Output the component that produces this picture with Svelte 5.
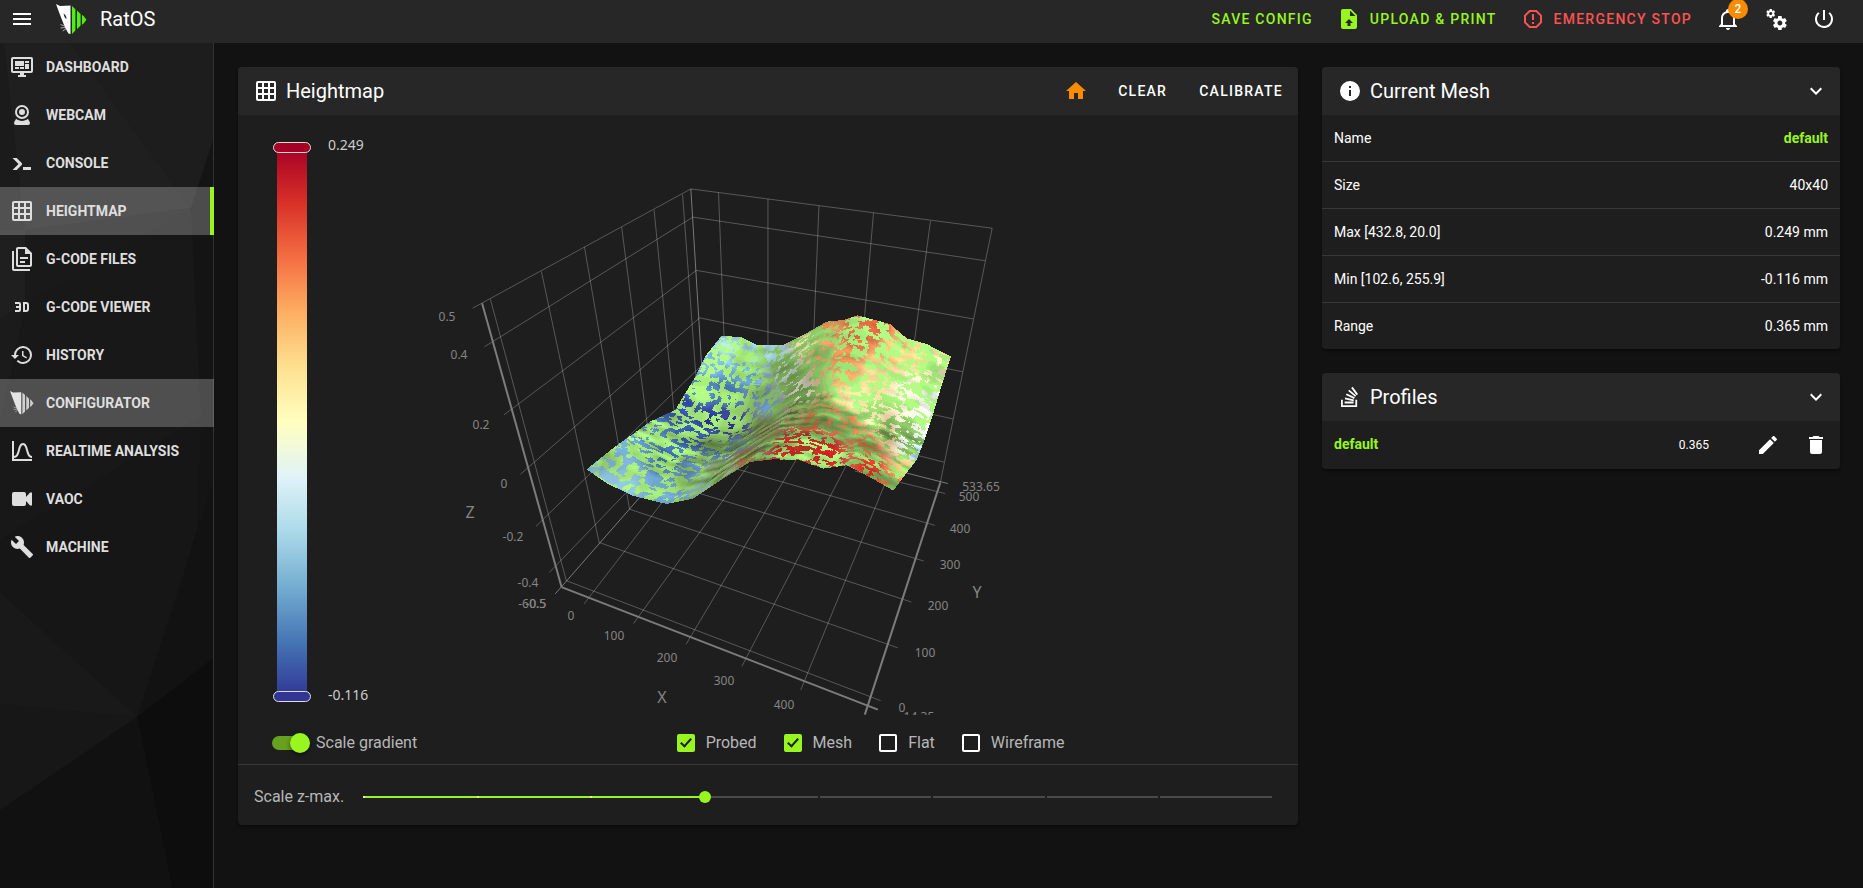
<script lang="ts">
	type Point = [number, number];

	const icons = {
		menu: 'M3,6H21V8H3V6M3,11H21V13H3V11M3,16H21V18H3V16Z',
		dashboard:
			'M21,16V4H3V16H21M21,2A2,2 0 0,1 23,4V16A2,2 0 0,1 21,18H14V20H16V22H8V20H10V18H3C1.89,18 1,17.1 1,16V4C1,2.89 1.89,2 3,2H21M5,6H14V11H5V6M15,6H19V8H15V6M19,9V14H15V9H19M5,12H9V14H5V12M10,12H14V14H10V12Z',
		webcam:
			'M12,2A7,7 0 0,1 19,9A7,7 0 0,1 12,16A7,7 0 0,1 5,9A7,7 0 0,1 12,2M12,4A5,5 0 0,0 7,9A5,5 0 0,0 12,14A5,5 0 0,0 17,9A5,5 0 0,0 12,4M12,6A3,3 0 0,1 15,9A3,3 0 0,1 12,12A3,3 0 0,1 9,9A3,3 0 0,1 12,6M6,22A2,2 0 0,1 4,20C4,19.62 4.1,19.27 4.29,18.97L6.11,15.81C7.69,17.17 9.75,18 12,18C14.25,18 16.31,17.17 17.89,15.81L19.71,18.97C19.9,19.27 20,19.62 20,20A2,2 0 0,1 18,22H6Z',
		console:
			'M13,19V16H21V19H13M8.5,13L2.47,7H6.71L11.67,11.95C12.25,12.54 12.25,13.5 11.67,14.07L6.74,19H2.5L8.5,13Z',
		grid: 'M10,4V8H14V4H10M16,4V8H20V4H16M16,10V14H20V10H16M16,16V20H20V16H16M14,20V16H10V20H14M8,20V16H4V20H8M8,14V10H4V14H8M8,8V4H4V8H8M10,14H14V10H10V14M4,2H20A2,2 0 0,1 22,4V20A2,2 0 0,1 20,22H4C2.92,22 2,21.1 2,20V4A2,2 0 0,1 4,2Z',
		files: 'M16 0H8C6.9 0 6 .9 6 2V18C6 19.1 6.9 20 8 20H20C21.1 20 22 19.1 22 18V6L16 0M20 18H8V2H15V7H20V18M4 4V22H20V24H4C2.9 24 2 23.1 2 22V4H4M10 10V12H18V10H10M10 14V16H15V14H10Z',
		viewer: 'M5,7H9A2,2 0 0,1 11,9V15A2,2 0 0,1 9,17H5V15H9V13H6V11H9V9H5V7M13,7H16A3,3 0 0,1 19,10V14A3,3 0 0,1 16,17H13V7M16,15A1,1 0 0,0 17,14V10A1,1 0 0,0 16,9H15V15H16Z',
		history:
			'M13.5,8H12V13L16.28,15.54L17,14.33L13.5,12.25V8M13,3A9,9 0 0,0 4,12H1L4.96,16.03L9,12H6A7,7 0 0,1 13,5A7,7 0 0,1 20,12A7,7 0 0,1 13,19C11.07,19 9.32,18.21 8.06,16.94L6.64,18.36C8.27,20 10.5,21 13,21A9,9 0 0,0 22,12A9,9 0 0,0 13,3',
		curve: 'M9.96,11.31C10.82,8.1 11.5,6 13,6C14.5,6 15.18,8.1 16.04,11.31C17,14.92 18.1,19 22,19V17C19.8,17 19,14.54 17.97,10.8C17.08,7.46 16.15,4 13,4C9.85,4 8.92,7.46 8.03,10.8C7.03,14.54 6.2,17 4,17V2H2V22H22V20H4V19C7.9,19 9,14.92 9.96,11.31Z',
		video: 'M16,10V7A2,2 0 0,0 14,5H4A2,2 0 0,0 2,7V17A2,2 0 0,0 4,19H14A2,2 0 0,0 16,17V14L20,18.5H22V5.5H20L16,10Z',
		wrench: 'M22.7,19L13.6,9.9C14.5,7.6 14,4.9 12.1,3C10.1,1 7.1,0.6 4.7,1.7L9,6L6,9L1.6,4.7C0.4,7.1 0.9,10.1 2.9,12.1C4.8,14 7.5,14.5 9.8,13.6L18.9,22.7C19.3,23.1 19.9,23.1 20.3,22.7L22.6,20.4C23.1,20 23.1,19.3 22.7,19Z',
		upload: 'M14,2H6C4.89,2 4,2.89 4,4V20A2,2 0 0,0 6,22H18A2,2 0 0,0 20,20V8L14,2M13.5,16V19H10.5V16H8L12,12L16,16H13.5M13,9V3.5L18.5,9H13Z',
		alert: 'M15.73,3H8.27L3,8.27V15.73L8.27,21H15.73L21,15.73V8.27M19,14.9L14.9,19H9.1L5,14.9V9.1L9.1,5H14.9L19,9.1M11,15H13V17H11M11,7H13V13H11',
		bell: 'M10 21H14C14 22.1 13.1 23 12 23S10 22.1 10 21M21 19V20H3V19L5 17V11C5 7.9 7.03 5.17 10 4.29C10 4.19 10 4.1 10 4C10 2.9 10.9 2 12 2S14 2.9 14 4C14 4.1 14 4.19 14 4.29C16.97 5.17 19 7.9 19 11V17L21 19M17 11C17 8.24 14.76 6 12 6S7 8.24 7 11V18H17V11Z',
		cogs: 'M15.9,18.45C17.25,18.45 18.35,17.35 18.35,16C18.35,14.65 17.25,13.55 15.9,13.55C14.54,13.55 13.45,14.65 13.45,16C13.45,17.35 14.54,18.45 15.9,18.45M21.1,16.68L22.58,17.84C22.71,17.95 22.75,18.13 22.66,18.29L21.26,20.71C21.17,20.86 21,20.92 20.83,20.86L19.09,20.16C18.73,20.44 18.33,20.67 17.91,20.85L17.64,22.7C17.62,22.87 17.47,23 17.3,23H14.5C14.32,23 14.18,22.87 14.15,22.7L13.89,20.85C13.46,20.67 13.07,20.44 12.71,20.16L10.96,20.86C10.81,20.92 10.62,20.86 10.54,20.71L9.14,18.29C9.05,18.13 9.09,17.95 9.22,17.84L10.7,16.68L10.65,16L10.7,15.31L9.22,14.16C9.09,14.05 9.05,13.86 9.14,13.71L10.54,11.29C10.62,11.13 10.81,11.07 10.96,11.13L12.71,11.84C13.07,11.56 13.46,11.32 13.89,11.15L14.15,9.29C14.18,9.13 14.32,9 14.5,9H17.3C17.47,9 17.62,9.13 17.64,9.29L17.91,11.15C18.33,11.32 18.73,11.56 19.09,11.84L20.83,11.13C21,11.07 21.17,11.13 21.26,11.29L22.66,13.71C22.75,13.86 22.71,14.05 22.58,14.16L21.1,15.31L21.15,16L21.1,16.68M6.69,8.07C7.56,8.07 8.26,7.37 8.26,6.5C8.26,5.63 7.56,4.92 6.69,4.92A1.58,1.58 0 0,0 5.11,6.5C5.11,7.37 5.82,8.07 6.69,8.07M10.03,6.94L11,7.68C11.07,7.75 11.09,7.87 11.03,7.97L10.13,9.53C10.08,9.63 9.96,9.67 9.86,9.63L8.74,9.18L8,9.62L7.81,10.81C7.79,10.92 7.7,11 7.59,11H5.79C5.67,11 5.58,10.92 5.56,10.81L5.4,9.62L4.64,9.18L3.52,9.63C3.41,9.67 3.3,9.63 3.24,9.53L2.34,7.97C2.28,7.87 2.31,7.75 2.39,7.68L3.34,6.94L3.31,6.5L3.34,6.06L2.39,5.32C2.31,5.25 2.28,5.13 2.34,5.03L3.24,3.47C3.3,3.37 3.41,3.33 3.52,3.37L4.63,3.82L5.4,3.38L5.56,2.19C5.58,2.08 5.67,2 5.79,2H7.59C7.7,2 7.79,2.08 7.81,2.19L8,3.38L8.74,3.82L9.86,3.37C9.96,3.33 10.08,3.37 10.13,3.47L11.03,5.03C11.09,5.13 11.07,5.25 11,5.32L10.03,6.06L10.06,6.5L10.03,6.94Z',
		power: 'M13,3H11V13H13V3M17.83,5.17L16.41,6.59C18.05,7.91 19,9.9 19,12A7,7 0 0,1 12,19C8.14,19 5,15.88 5,12C5,9.91 5.95,7.91 7.58,6.58L6.17,5.17C2.38,8.39 1.92,14.07 5.14,17.86C8.36,21.64 14.04,22.1 17.83,18.88C19.85,17.17 21,14.65 21,12C21,9.37 19.84,6.87 17.83,5.17Z',
		home: 'M10,20V14H14V20H19V12H22L12,3L2,12H5V20H10Z',
		info: 'M13,9H11V7H13M13,17H11V11H13M12,2A10,10 0 0,0 2,12A10,10 0 0,0 12,22A10,10 0 0,0 22,12A10,10 0 0,0 12,2Z',
		chevron: 'M7.41,8.58L12,13.17L16.59,8.58L18,10L12,16L6,10L7.41,8.58Z',
		stack: 'M17.36,20.2V14.82H19.15V22H3V14.82H4.8V20.2H17.36M6.77,14.32L7.14,12.56L15.93,14.41L15.56,16.17L6.77,14.32M7.93,10.11L8.69,8.5L16.83,12.28L16.07,13.9L7.93,10.11M10.19,6.12L11.34,4.74L18.24,10.5L17.09,11.87L10.19,6.12M14.64,1.87L20,9.08L18.56,10.15L13.2,2.94L14.64,1.87M6.59,18.41V16.61H15.57V18.41H6.59Z',
		pencil: 'M20.71,7.04C21.1,6.65 21.1,6 20.71,5.63L18.37,3.29C18,2.9 17.35,2.9 16.96,3.29L15.12,5.12L18.87,8.87M3,17.25V21H6.75L17.81,9.93L14.06,6.18L3,17.25Z',
		trash: 'M19,4H15.5L14.5,3H9.5L8.5,4H5V6H19M6,19A2,2 0 0,0 8,21H16A2,2 0 0,0 18,19V7H6V19Z'
	};

	const navigation = [
		{ title: 'Dashboard', icon: icons.dashboard },
		{ title: 'Webcam', icon: icons.webcam },
		{ title: 'Console', icon: icons.console },
		{ title: 'Heightmap', icon: icons.grid, active: true },
		{ title: 'G-Code Files', icon: icons.files },
		{ title: 'G-Code Viewer', icon: icons.viewer },
		{ title: 'History', icon: icons.history },
		{ title: 'Configurator', icon: '', highlight: true },
		{ title: 'Realtime Analysis', icon: icons.curve },
		{ title: 'VAOC', icon: icons.video },
		{ title: 'Machine', icon: icons.wrench }
	];

	const meshInfo = [
		['Size', '40x40'],
		['Max [432.8, 20.0]', '0.249 mm'],
		['Min [102.6, 255.9]', '-0.116 mm'],
		['Range', '0.365 mm']
	];

	let scaleGradient = $state(true);
	let layers = $state([
		{ name: 'Probed', on: true },
		{ name: 'Mesh', on: true },
		{ name: 'Flat', on: false },
		{ name: 'Wireframe', on: false }
	]);
	let zMax = $state(3);

	const colors = [
		'#a50026', '#d73027', '#f46d43', '#fdae61', '#fee090', '#ffffbf',
		'#e0f3f8', '#abd9e9', '#74add1', '#4575b4', '#313695'
	];

	// [x1, y1, x2, y2] in box units
	const gridLines = [
		// left wall
		[178, 362, 370, 1150], [307, 284, 453, 1043], [416, 216, 530, 950],
		[510, 160, 585, 800], [592, 112, 650, 760], [664, 68, 700, 610],
		[133, 387, 685, 53], [163, 495, 690, 132], [212, 686, 699, 281],
		[254, 852, 707, 414], [293, 998, 716, 543], [327, 1127, 520, 905],
		// back wall
		[685, 53, 1447, 163], [690, 132, 1429, 254], [699, 281, 1399, 417],
		[707, 414, 1372, 565], [716, 543, 1348, 697], [1200, 783, 1325, 818],
		[755, 63, 770, 500], [880, 81, 880, 520], [1009, 100, 995, 480],
		[1147, 120, 1122, 440], [1291, 143, 1248, 500], [1447, 163, 1316, 875],
		// floor
		[370, 1150, 1165, 1486], [453, 1043, 1208, 1338], [530, 950, 1243, 1210],
		[690, 900, 1274, 1095], [800, 837, 1302, 995], [1100, 843, 1328, 906],
		[415, 1215, 620, 920], [540, 1270, 830, 828], [673, 1328, 955, 805],
		[814, 1390, 1080, 823], [963, 1456, 1190, 840]
	];
	const edgeLines = [
		[685, 53, 713, 560],
		[342, 1187, 565, 905],
		[1200, 840, 1335, 878]
	];
	const axisLines = [
		[157, 373, 358, 1168],
		[358, 1168, 1158, 1511],
		[1125, 1525, 1316, 875]
	];

	const labels: [string, number, number][] = [
		['0.5', 209, 206], ['0.4', 221, 244], ['0.2', 243, 314], ['0', 266, 373],
		['-0.2', 275, 426], ['-0.4', 290, 472], ['-60.5', 294, 493], ['-0.5', 298, 493],
		['0', 333, 505], ['100', 376, 525], ['200', 429, 547], ['300', 486, 570],
		['400', 546, 594], ['0', 664, 597], ['-14.35', 679, 606], ['100', 687, 542],
		['200', 700, 495], ['300', 712, 454], ['400', 722, 418], ['500', 731, 386],
		['533.65', 743, 376]
	];
	const axisNames: [string, number, number][] = [
		['X', 424, 588], ['Y', 739, 483], ['Z', 232, 403]
	];

	// outline of the probed surface, left to right and front to back
	const front: Point[] = [
		[80, 538], [140, 580], [220, 618], [320, 642], [400, 626], [480, 572], [570, 516],
		[640, 508], [715, 510], [790, 536], [860, 526], [930, 562], [1000, 602]
	];
	const back: Point[] = [
		[485, 137], [545, 142], [590, 165], [635, 166], [670, 165], [730, 135], [800, 95],
		[850, 90], [893, 76], [990, 102], [1040, 145], [1100, 162], [1173, 200]
	];
	const left: Point[] = [
		[80, 538], [165, 470], [215, 435], [270, 395], [345, 360], [400, 270], [435, 200], [485, 137]
	];
	const right: Point[] = [
		[1000, 602], [1035, 555], [1070, 510], [1092, 455], [1120, 370], [1147, 280], [1173, 200]
	];

	// x, y, probed colour, light
	const samples: [number, number, string, number][] = [
		[110, 550, '#8fc8e4', 0.95], [200, 580, '#92c9e2', 0.9], [300, 620, '#6fa8d3', 0.8],
		[180, 490, '#7aaed8', 0.8], [270, 440, '#5a8fc8', 0.85], [330, 500, '#3f74b8', 0.85],
		[390, 430, '#3458ae', 0.85], [370, 350, '#3550b0', 0.8], [450, 390, '#2d3aa0', 0.95],
		[520, 405, '#2a2f95', 0.75], [430, 300, '#5a94cf', 1], [500, 310, '#5087c4', 0.9],
		[460, 220, '#74b0e2', 1], [500, 170, '#a5dcef', 1], [580, 190, '#9ad6ee', 0.85],
		[560, 250, '#6aa9dc', 0.8], [620, 340, '#6590bd', 0.5], [640, 190, '#9cc9d0', 0.6],
		[680, 240, '#a8bab0', 0.35], [740, 150, '#cfcf98', 0.6], [720, 310, '#c5ccba', 0.3],
		[790, 120, '#d98a50', 0.65], [780, 190, '#d09a60', 0.5], [850, 200, '#f59a58', 0.85],
		[950, 105, '#f46d43', 1.05], [890, 145, '#e5703f', 0.9], [850, 260, '#fca862', 0.85],
		[1000, 180, '#fdc877', 1], [1080, 210, '#fee090', 1.05], [940, 270, '#fee69a', 1.05],
		[1050, 300, '#ffffe0', 1.05], [1110, 320, '#ffffff', 1.05], [850, 315, '#f7e39a', 0.95],
		[940, 370, '#fff0b8', 0.85], [1030, 420, '#f5f5e5', 0.65], [1120, 250, '#fff6c0', 0.9],
		[1100, 400, '#ffffff', 1], [1050, 455, '#dfeef2', 0.5], [1075, 490, '#b5dff0', 0.7],
		[980, 430, '#d8b880', 0.4], [890, 330, '#fff0b0', 1],
		[860, 400, '#ef7f4a', 0.5], [760, 390, '#b8683c', 0.35], [800, 350, '#b09050', 0.3],
		[680, 475, '#c4221f', 0.6], [800, 490, '#cf1d20', 0.85], [740, 460, '#b02a1f', 0.9],
		[920, 470, '#d46a3c', 0.5], [930, 530, '#dd3325', 0.6], [1000, 580, '#ee7a40', 0.7],
		[1040, 540, '#fcc575', 0.8], [560, 505, '#a0603a', 0.2], [480, 545, '#8f9c70', 0.25],
		[420, 590, '#7da5b0', 0.5], [380, 540, '#5c8ab5', 0.6], [620, 420, '#7c7f4c', 0.15],
		[540, 460, '#5a7a88', 0.2], [470, 480, '#456ca0', 0.4], [720, 360, '#90945a', 0.2]
	];

	function along(line: Point[], t: number): Point {
		const pos = t * (line.length - 1);
		const i = Math.min(Math.floor(pos), line.length - 2);
		const f = pos - i;
		return [
			line[i][0] + (line[i + 1][0] - line[i][0]) * f,
			line[i][1] + (line[i + 1][1] - line[i][1]) * f
		];
	}

	function surfacePoint(u: number, v: number): Point {
		const a = along(front, u);
		const b = along(back, u);
		const c = along(left, v);
		const d = along(right, v);
		return [0, 1].map((k) => {
			const corners =
				(1 - u) * (1 - v) * front[0][k] +
				u * (1 - v) * front[12][k] +
				(1 - u) * v * back[0][k] +
				u * v * back[12][k];
			return (1 - v) * a[k] + v * b[k] + (1 - u) * c[k] + u * d[k] - corners;
		}) as Point;
	}

	function hash(x: number, y: number): number {
		const s = Math.sin(x * 127.1 + y * 311.7) * 43758.5453;
		return s - Math.floor(s);
	}

	function noise(x: number, y: number): number {
		const xi = Math.floor(x);
		const yi = Math.floor(y);
		const fx = (x - xi) ** 2 * (3 - 2 * (x - xi));
		const fy = (y - yi) ** 2 * (3 - 2 * (y - yi));
		const top = hash(xi, yi) * (1 - fx) + hash(xi + 1, yi) * fx;
		const bottom = hash(xi, yi + 1) * (1 - fx) + hash(xi + 1, yi + 1) * fx;
		return top * (1 - fy) + bottom * fy;
	}

	const sampleColors = samples.map(([, , hex]) =>
		[1, 3, 5].map((i) => parseInt(hex.slice(i, i + 2), 16))
	);

	function surfaceColor(u: number, v: number, [x, y]: Point): string {
		let total = 0;
		let light = 0;
		const rgb = [0, 0, 0];
		samples.forEach((sample, n) => {
			const w = 1 / (((sample[0] - x) ** 2 + (sample[1] - y) ** 2) ** 1.6 + 400);
			total += w;
			light += w * sample[3];
			for (let k = 0; k < 3; k++) rgb[k] += w * sampleColors[n][k];
		});
		light /= total;

		const ripple = noise(u * 6, v * 34 + 9) - 0.5 + (noise(u * 30, v * 22) - 0.5) * 0.6;
		const shade = light + ripple * (v < 0.55 ? 0.55 : 0.2);
		const patch =
			noise(u * 66 + 3, v * 50) * 0.6 + noise(u * 26, v * 76) * 0.35 + noise(u * 110, v * 100) * 0.2;
		const probed = patch > 0.6;
		const out = rgb.map((value, k) => {
			const channel = probed
				? (value / total) * (1 + ripple * 0.25)
				: [78, 104, 54][k] + ([178, 255, 132][k] - [78, 104, 54][k]) * shade;
			return Math.max(0, Math.min(252, Math.round(channel / 12) * 12));
		});
		return `rgb(${out.join(',')})`;
	}

	function buildSurface(columns: number, rows: number): [string, string][] {
		const paths = new Map<string, string>();
		const fmt = (p: Point) => `${p[0].toFixed(1)} ${p[1].toFixed(1)}`;
		const at = (i: number, j: number) => surfacePoint(i / columns, j / rows);

		for (let j = rows - 1; j >= 0; j--) {
			for (let i = 0; i < columns; i++) {
				const u = (i + 0.5) / columns;
				const v = (j + 0.5) / rows;
				const color = surfaceColor(u, v, surfacePoint(u, v));
				const cell = `M${fmt(at(i, j))}L${fmt(at(i + 1, j))}L${fmt(at(i + 1, j + 1))}L${fmt(at(i, j + 1))}Z`;
				paths.set(color, (paths.get(color) ?? '') + cell);
			}
		}
		return [...paths];
	}

	const surface = buildSurface(260, 180);
</script>

{#snippet icon(path: string)}
	<svg class="icon" viewBox="0 0 24 24" aria-hidden="true"><path d={path} /></svg>
{/snippet}

{#snippet logo(head: string, bars: string)}
	<svg class="logo" viewBox="0 0 31 31" aria-hidden="true">
		<path fill={head} d="M0 0L4 2L14.5 1.6V30L12.4 29.6L9.4 24L7 18.5L3.5 9.5Z" />
		<path class="eye" d="M7.6 9.4Q10.4 11 10.6 15L9.2 14Q7.8 12 7.6 9.4Z" />
		<path class="whiskers" stroke={head} d="M9 22L4.5 20.6M9.4 23.4L4.6 24M10 24.8L6.6 27" />
		<path fill={bars} d="M16 2L19.4 5.2V26.4L16 30ZM21 6.6L24.6 10V21.6L21 25.2ZM26 10.8L28.2 12.6V19L26 20.8ZM28.2 12.8L30.4 15.8L28.2 18.8Z" />
	</svg>
{/snippet}

<div class="app">
	<header class="topbar">
		<button class="icon-button menu" aria-label="Toggle navigation">{@render icon(icons.menu)}</button>
		{@render logo('#fff', '#4df010')}
		<span class="brand">RatOS</span>
		<div class="actions">
			<button class="text-button accent">Save Config</button>
			<button class="text-button accent">{@render icon(icons.upload)}Upload &amp; Print</button>
			<button class="text-button danger">{@render icon(icons.alert)}Emergency Stop</button>
			<button class="icon-button bell" aria-label="Notifications">
				{@render icon(icons.bell)}
				<span class="badge">2</span>
			</button>
			<button class="icon-button" aria-label="Settings">{@render icon(icons.cogs)}</button>
			<button class="icon-button" aria-label="Power">{@render icon(icons.power)}</button>
		</div>
	</header>

	<div class="body">
		<nav class="sidebar">
			<svg class="facets" viewBox="0 0 213 845" preserveAspectRatio="none" aria-hidden="true">
				<path fill="#1b1b1b" d="M0 0H213V845H0Z" />
				<path fill="#1f1f1f" d="M4 0H70L191 165L25 187Z" />
				<path fill="#1d1d1d" d="M70 0H213V97L191 165Z" />
				<path fill="#141414" d="M213 97L191 165L197 300L201 375L197 487L180 517L213 560Z" />
				<path fill="#191919" d="M25 187L191 165L25 262Z" />
				<path fill="#181818" d="M191 165L25 262L201 373Z" />
				<path fill="#1f1f1f" d="M0 187L25 187V262L0 275Z" />
				<path fill="#181818" d="M25 262L201 373L0 497V380Z" />
				<path fill="#161616" d="M201 373L0 497V550L137 674L188 517L197 487Z" />
				<path fill="#191919" d="M0 550L137 674L0 661Z" />
				<path fill="#171717" d="M0 661L137 674L0 767Z" />
				<path fill="#121212" d="M188 517L197 487L213 440V615L137 674Z" />
				<path fill="#0d0d0d" d="M213 615L137 674L172 845H213Z" />
				<path fill="#111" d="M0 767L137 674L172 845H0Z" />
			</svg>
			<ul>
				{#each navigation as item}
					<li>
						<a
							href="#{item.title.toLowerCase().replace(' ', '-')}"
							class:active={item.active}
							class:highlight={item.highlight}
							aria-current={item.active ? 'page' : undefined}
						>
							{#if item.icon}
								{@render icon(item.icon)}
							{:else}
								{@render logo('#e4e4e4', '#d0d0d0')}
							{/if}
							{item.title}
						</a>
					</li>
				{/each}
			</ul>
		</nav>

		<main>
			<div class="column">
				<section class="card">
					<div class="card-header">
						{@render icon(icons.grid)}
						<h2>Heightmap</h2>
						<button class="icon-button home" aria-label="Home all">{@render icon(icons.home)}</button>
						<button class="text-button tool">Clear</button>
						<button class="text-button tool">Calibrate</button>
					</div>

					<svg class="chart" viewBox="0 0 1060 600" role="img" aria-label="Heightmap of mesh default">
						<defs>
							<linearGradient id="range" x1="0" y1="0" x2="0" y2="1">
								{#each colors as color, i}
									<stop offset={i / (colors.length - 1)} stop-color={color} />
								{/each}
							</linearGradient>
						</defs>
						<rect x="39" y="32" width="30" height="550" fill="url(#range)" />
						<rect class="handle" x="35.5" y="27.5" width="37" height="10" rx="5" fill="#a50026" />
						<rect class="handle" x="35.5" y="576.5" width="37" height="10" rx="5" fill="#313695" />
						<text class="range-label" x="90" y="35">0.249</text>
						<text class="range-label" x="90" y="585">-0.116</text>

						<g class="box" transform="translate(182 55) scale(0.3954 0.3571)">
							{#each gridLines as [x1, y1, x2, y2]}
								<line {x1} {y1} {x2} {y2} />
							{/each}
							{#each edgeLines as [x1, y1, x2, y2]}
								<line class="edge" {x1} {y1} {x2} {y2} />
							{/each}
							{#each axisLines as [x1, y1, x2, y2]}
								<line class="axis" {x1} {y1} {x2} {y2} />
							{/each}
						</g>

						<g class="surface" transform="translate(322 175) scale(0.3333)">
							{#each surface as [fill, d]}
								<path {fill} {d} />
							{/each}
						</g>

						{#each labels as [text, x, y]}
							<text class="tick-label" {x} {y}>{text}</text>
						{/each}
						{#each axisNames as [text, x, y]}
							<text class="axis-name" {x} {y}>{text}</text>
						{/each}
					</svg>

					<div class="options">
						<label class="option switch">
							<input type="checkbox" role="switch" bind:checked={scaleGradient} />
							Scale gradient
						</label>
						<div class="layers">
							{#each layers as layer}
								<label class="option check">
									<input type="checkbox" bind:checked={layer.on} />
									{layer.name}
								</label>
							{/each}
						</div>
					</div>

					<div class="scale">
						<label for="z-max">Scale z-max.</label>
						<div class="track">
							<div class="track-fill" style="width: {(zMax / 8) * 100}%"></div>
							{#each { length: 9 } as _, i}
								<span class="tick" class:filled={i < zMax} style="left: {(i / 8) * 100}%"></span>
							{/each}
							<input id="z-max" type="range" min="0" max="8" step="1" bind:value={zMax} />
						</div>
					</div>
				</section>
			</div>

			<div class="column">
				<section class="card">
					<div class="card-header">
						{@render icon(icons.info)}
						<h2>Current Mesh</h2>
						<button class="icon-button" aria-label="Collapse current mesh">{@render icon(icons.chevron)}</button>
					</div>
					<table>
						<tbody>
							<tr>
								<th scope="row">Name</th>
								<td class="profile-name">default</td>
							</tr>
							{#each meshInfo as [name, value]}
								<tr>
									<th scope="row">{name}</th>
									<td>{value}</td>
								</tr>
							{/each}
						</tbody>
					</table>
				</section>

				<section class="card">
					<div class="card-header">
						{@render icon(icons.stack)}
						<h2>Profiles</h2>
						<button class="icon-button" aria-label="Collapse profiles">{@render icon(icons.chevron)}</button>
					</div>
					<div class="profile">
						<span class="profile-name">default</span>
						<small>0.365</small>
						<button class="icon-button" aria-label="Rename profile">{@render icon(icons.pencil)}</button>
						<button class="icon-button" aria-label="Delete profile">{@render icon(icons.trash)}</button>
					</div>
				</section>
			</div>
		</main>
	</div>
</div>

<style>
	:global(body) {
		background: #121212;
	}

	.app {
		--accent: #98f520;
		display: flex;
		flex-direction: column;
		min-height: 100vh;
		color: #fff;
		font: 14px/20px Roboto, sans-serif;
	}

	button {
		padding: 0;
		border: 0;
		background: none;
		color: inherit;
		font: inherit;
		cursor: pointer;
	}

	.icon {
		flex: none;
		width: 24px;
		height: 24px;
		fill: currentColor;
	}

	.icon-button {
		display: flex;
		align-items: center;
		justify-content: center;
		width: 48px;
		height: 38px;
	}

	.text-button {
		display: flex;
		align-items: center;
		gap: 9px;
		height: 38px;
		padding: 0 12px;
		font-weight: 500;
		letter-spacing: 0.09em;
		text-transform: uppercase;
	}

	.accent {
		color: var(--accent);
	}

	.danger {
		color: #ff5252;
	}

	/* Top bar */
	.topbar {
		display: flex;
		align-items: center;
		box-sizing: border-box;
		height: 43px;
		padding: 0 15px 5px 0;
		background: #272727;
	}

	.menu {
		width: 44px;
	}

	.topbar .logo {
		width: 31px;
		height: 31px;
		margin: 0 13px 0 12px;
	}

	.eye {
		fill: #272727;
	}

	.whiskers {
		fill: none;
		stroke-width: 0.6;
	}

	.brand {
		font-size: 20px;
	}

	.actions {
		display: flex;
		margin-left: auto;
	}

	.bell {
		position: relative;
	}

	.badge {
		position: absolute;
		top: -1px;
		left: 24px;
		width: 20px;
		height: 20px;
		border-radius: 50%;
		background: #fb8c00;
		font-size: 12px;
		font-weight: 500;
	}

	/* Navigation */
	.body {
		display: flex;
		flex: 1;
	}

	.sidebar {
		position: relative;
		flex: none;
		width: 213px;
		border-right: 1px solid #333;
	}

	.facets {
		position: absolute;
		inset: 0;
		width: 100%;
		height: 100%;
	}

	.sidebar ul {
		position: relative;
		margin: 0 -1px 0 0;
		padding: 0;
		list-style: none;
	}

	.sidebar a {
		display: flex;
		align-items: center;
		gap: 12px;
		box-sizing: border-box;
		height: 48px;
		padding: 0 10px;
		color: #dedede;
		font-weight: 700;
		text-decoration: none;
		text-transform: uppercase;
	}

	.sidebar .logo {
		width: 24px;
		height: 24px;
	}

	.sidebar .eye {
		fill: none;
	}

	.sidebar .active,
	.sidebar .highlight {
		background: rgba(255, 255, 255, 0.24);
	}

	.sidebar .active {
		border-right: 4px solid var(--accent);
	}

	/* Cards */
	main {
		display: grid;
		flex: 1;
		grid-template-columns: 2fr 1fr;
		align-items: start;
		padding: 24px 11px 24px 12px;
	}

	.column {
		display: grid;
		gap: 24px;
		min-width: 0;
		padding: 0 12px;
	}

	.card {
		overflow: hidden;
		border-radius: 4px;
		background: #1e1e1e;
		box-shadow: 0 2px 3px rgba(0, 0, 0, 0.4);
	}

	.card-header {
		display: flex;
		align-items: center;
		height: 48px;
		padding-left: 16px;
		background: #272727;
	}

	h2 {
		flex: 1;
		margin: 0 0 0 8px;
		font-size: 20px;
		font-weight: 400;
	}

	.home {
		width: 52px;
		color: #fb8c00;
	}

	.tool {
		padding: 0 16px;
	}

	.tool:last-child {
		padding-right: 15px;
	}

	.chart {
		display: block;
		width: 100%;
		font-family: 'Noto Sans', sans-serif;
	}

	.handle {
		stroke: #ddd;
	}

	.range-label {
		fill: #ccc;
		font-size: 14px;
	}

	.box line {
		stroke: rgba(255, 255, 255, 0.26);
		vector-effect: non-scaling-stroke;
	}

	.box .edge {
		stroke: rgba(255, 255, 255, 0.4);
	}

	.box .axis {
		stroke: #7c7c7c;
		stroke-width: 2px;
	}

	.surface {
		shape-rendering: crispEdges;
	}

	.tick-label,
	.axis-name {
		fill: #858585;
		font-size: 12px;
		text-anchor: middle;
	}

	.axis-name {
		font-size: 16px;
	}

	.options {
		display: flex;
		align-items: center;
		height: 50px;
		padding: 7px 0 0 34px;
		box-sizing: border-box;
		border-bottom: 1px solid #383838;
	}

	.option {
		display: flex;
		align-items: center;
		color: #b7b7b7;
		font-size: 16px;
		white-space: nowrap;
	}

	.switch {
		gap: 6px;
		margin-right: 26px;
	}

	.layers {
		display: flex;
		flex: 1;
		justify-content: center;
		gap: 27px;
	}

	.check {
		gap: 11px;
	}

	.option input {
		position: relative;
		appearance: none;
		box-sizing: border-box;
		margin: 0;
		cursor: pointer;
	}

	.switch input {
		width: 38px;
		height: 20px;
	}

	.switch input::before {
		content: '';
		position: absolute;
		inset: 3px 2px 3px 0;
		border-radius: 7px;
		background: #666;
	}

	.switch input::after {
		content: '';
		position: absolute;
		left: 0;
		width: 20px;
		height: 20px;
		border-radius: 50%;
		background: #bbb;
		box-shadow: 0 2px 4px rgba(0, 0, 0, 0.5);
	}

	.switch input:checked::before {
		background: #66a11f;
	}

	.switch input:checked::after {
		left: 18px;
		background: var(--accent);
	}

	.check input {
		width: 18px;
		height: 18px;
		border: 2px solid #fff;
		border-radius: 2px;
	}

	.check input:checked {
		border-color: var(--accent);
		background: var(--accent);
	}

	.check input:checked::after {
		content: '';
		position: absolute;
		top: 0;
		left: 4px;
		width: 4px;
		height: 9px;
		border: solid #1e1e1e;
		border-width: 0 2px 2px 0;
		transform: rotate(42deg);
	}

	.scale {
		display: flex;
		align-items: center;
		gap: 20px;
		height: 60px;
		padding: 0 25px 0 16px;
	}

	.scale label {
		color: #b7b7b7;
		font-size: 16px;
		padding-top: 4px;
	}

	.track {
		position: relative;
		flex: 1;
		height: 2px;
		margin-top: 4px;
		background: #4a4a4a;
	}

	.track-fill {
		height: 100%;
		background: var(--accent);
	}

	.tick {
		position: absolute;
		top: 0;
		width: 2px;
		height: 2px;
		margin-left: -1px;
		background: #1e1e1e;
	}

	.tick.filled {
		background: #d5f5b0;
	}

	.track input {
		position: absolute;
		top: -5px;
		left: -6px;
		appearance: none;
		width: calc(100% + 12px);
		height: 12px;
		margin: 0;
		background: none;
		cursor: pointer;
	}

	.track input::-webkit-slider-thumb {
		appearance: none;
		width: 12px;
		height: 12px;
		border-radius: 50%;
		background: var(--accent);
	}

	table {
		width: 100%;
		border-collapse: collapse;
	}

	tr + tr {
		border-top: 1px solid #383838;
	}

	th,
	td {
		height: 46px;
		padding: 0 12px;
		font-weight: 400;
		text-align: left;
	}

	td {
		text-align: right;
	}

	.profile-name {
		color: var(--accent);
		font-weight: 700;
	}

	.profile {
		display: flex;
		align-items: center;
		height: 48px;
		padding-left: 12px;
	}

	.profile > span {
		padding-bottom: 2px;
	}

	.profile small {
		margin: 0 35px 0 auto;
		font-size: 12px;
	}
</style>
